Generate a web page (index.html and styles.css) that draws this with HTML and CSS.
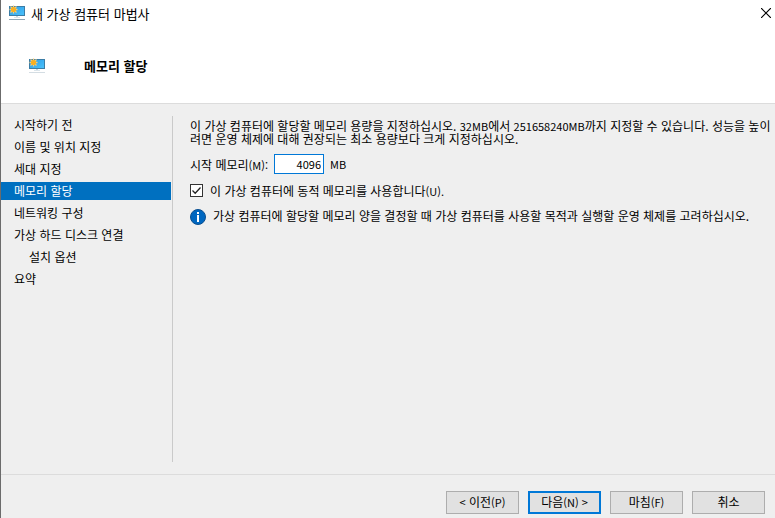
FILE: index.html
```html
<!DOCTYPE html>
<html lang="ko">
<head>
<meta charset="utf-8">
<meta name="viewport" content="width=device-width, initial-scale=1">
<title>새 가상 컴퓨터 마법사</title>
<link rel="stylesheet" href="styles.css">
</head>
<body>
<svg class="defs" aria-hidden="true">
  <defs>
    <linearGradient id="screen" x1="0" y1="0" x2="1" y2="1">
      <stop offset="0" stop-color="#2a9ae6"/>
      <stop offset="1" stop-color="#4cc3fb"/>
    </linearGradient>
    <symbol id="vm" viewBox="0 0 16 16">
      <rect x="0.5" y="1.5" width="15" height="9" fill="url(#screen)" stroke="#3b7da6"/>
      <path d="M7 11h2v1H7z" fill="#c3d6e2"/>
      <path d="M5 12.5h6" stroke="#dbe5eb"/>
      <path d="M0 14.5h16" stroke="currentColor"/>
      <path d="M4.500 0.500v8M0.500 4.500h8M1.500 1.500l6 6M7.500 1.500l-6 6" stroke="#fbd07a" stroke-width="1.300"/>
      <circle cx="4.500" cy="4.500" r="2.600" fill="#f9b021"/>
    </symbol>
  </defs>
</svg>
<div class="wizard">
  <header class="head">
    <div class="titlebar">
      <svg class="icon"><use href="#vm"/></svg>
      <span class="caption">새 가상 컴퓨터 마법사</span>
      <button class="close" type="button" aria-label="닫기">
        <svg width="10" height="10" viewBox="0 0 10 10"><path d="M0 0l10 10M10 0L0 10" stroke="#000" stroke-width="1.200"/></svg>
      </button>
    </div>
    <div class="banner">
      <svg class="icon"><use href="#vm"/></svg>
      <h1>메모리 할당</h1>
    </div>
  </header>
  <div class="body">
    <nav class="steps">
      <a href="#">시작하기 전</a>
      <a href="#">이름 및 위치 지정</a>
      <a href="#">세대 지정</a>
      <a href="#" class="current" aria-current="step">메모리 할당</a>
      <a href="#">네트워킹 구성</a>
      <a href="#">가상 하드 디스크 연결</a>
      <a href="#" class="sub">설치 옵션</a>
      <a href="#">요약</a>
    </nav>
    <main class="page">
      <p class="intro">이 가상 컴퓨터에 할당할 메모리 용량을 지정하십시오. <span class="latin">32MB</span>에서 <span class="latin">251658240MB</span>까지 지정할 수 있습니다. 성능을 높이려면 운영 체제에 대해 권장되는 최소 용량보다 크게 지정하십시오.</p>
      <div class="memory">
        <label for="mem">시작 메모리<span class="latin">(M):</span></label>
        <input id="mem" class="latin" type="text" value="4096">
        <span class="latin">MB</span>
      </div>
      <label class="dynamic">
        <span class="check">
          <input type="checkbox" checked>
          <svg width="13" height="13" viewBox="0 0 13 13" aria-hidden="true"><path d="M2.500 6.500l2.700 2.700 5.300-5.700" fill="none" stroke="#222" stroke-width="1.300"/></svg>
        </span>
        <span>이 가상 컴퓨터에 동적 메모리를 사용합니다<span class="latin">(U).</span></span>
      </label>
      <div class="note">
        <svg width="16" height="16" viewBox="0 0 16 16" aria-hidden="true">
          <circle cx="8" cy="8" r="7.500" fill="#0067c0" stroke="#0b4f8f"/>
          <path d="M7 3h2v2H7zM7 6h2v7H7z" fill="#fff"/>
        </svg>
        <p>가상 컴퓨터에 할당할 메모리 양을 결정할 때 가상 컴퓨터를 사용할 목적과 실행할 운영 체제를 고려하십시오.</p>
      </div>
    </main>
  </div>
  <footer class="actions">
    <button type="button"><span class="latin">&lt;</span> 이전<span class="latin">(P)</span></button>
    <button type="button" class="primary">다음<span class="latin">(N) &gt;</span></button>
    <button type="button">마침<span class="latin">(F)</span></button>
    <button type="button">취소</button>
  </footer>
</div>
</body>
</html>
```

FILE: styles.css
```css
* { box-sizing: border-box; }

body {
  margin: 0;
  font: 12px/13px "Noto Sans CJK KR", sans-serif;
  color: #000;
}

p, h1 { margin: 0; }

.defs { position: absolute; width: 0; height: 0; }

.latin { font-family: "Noto Sans CJK KR", sans-serif; font-size: 11px; line-height: 11px; }

.wizard {
  display: flex;
  flex-direction: column;
  min-height: 100vh;
  border-left: 1px solid #6b6b6b;
  background: #efefef;
}

.head {
  background: #fff;
  border-bottom: 1px solid #dcdcdc;
}

.icon { width: 16px; height: 16px; flex: none; color: #8fa6b5; }

.titlebar {
  display: flex;
  align-items: center;
  gap: 6px;
  height: 26px;
  padding: 0 4px 0 8px;
}

.caption { flex: 1; font-size: 13px; }

.close {
  display: flex;
  padding: 0;
  border: 0;
  background: none;
}

.banner {
  display: flex;
  align-items: center;
  gap: 39px;
  height: 77px;
  padding: 3px 28px 0;
}

.banner .icon { color: #d4dde3; }

h1 { font-size: 13px; line-height: 16px; font-weight: 700; }

.body {
  display: flex;
  flex: 1;
  padding: 12px 0;
}

.steps {
  display: flex;
  flex-direction: column;
  gap: 4px;
  width: 172px;
  padding-right: 1px;
  border-right: 1px solid #cacaca;
}

.steps a {
  padding: 0 13px;
  line-height: 18px;
  color: #000;
  text-decoration: none;
}

.steps .sub { padding-left: 28px; }

.steps .current { background: #0070c0; color: #fff; }

.page {
  flex: 1;
  padding: 3px 4px 0 17px;
}

.intro { word-break: break-all; }

.memory {
  display: flex;
  align-items: center;
  gap: 6px;
  margin-top: 9px;
}

.memory input {
  width: 50px;
  height: 20px;
  padding: 0 2px;
  border: 1px solid #0078d7;
  background: #fff;
  text-align: right;
}

.dynamic {
  display: flex;
  align-items: center;
  gap: 7px;
  margin-top: 10px;
}

.check { display: grid; }

.check > * { grid-area: 1 / 1; }

.check svg { pointer-events: none; }

.check input:not(:checked) + svg { visibility: hidden; }

.check input {
  appearance: none;
  width: 13px;
  height: 13px;
  margin: 0;
  border: 1px solid #333;
  background: #fff;
}

.note {
  display: flex;
  gap: 7px;
  margin-top: 12px;
}

.note svg { flex: none; }

.actions {
  display: flex;
  justify-content: flex-end;
  gap: 9px;
  padding: 16px 10px 4px;
  border-top: 1px solid #dcdcdc;
}

.actions button {
  width: 73px;
  height: 23px;
  padding: 0 0 2px;
  border: 1px solid #adadad;
  background: #e1e1e1;
  color: #000;
  font: inherit;
}

.actions .primary { border: 2px solid #0078d7; }
```
